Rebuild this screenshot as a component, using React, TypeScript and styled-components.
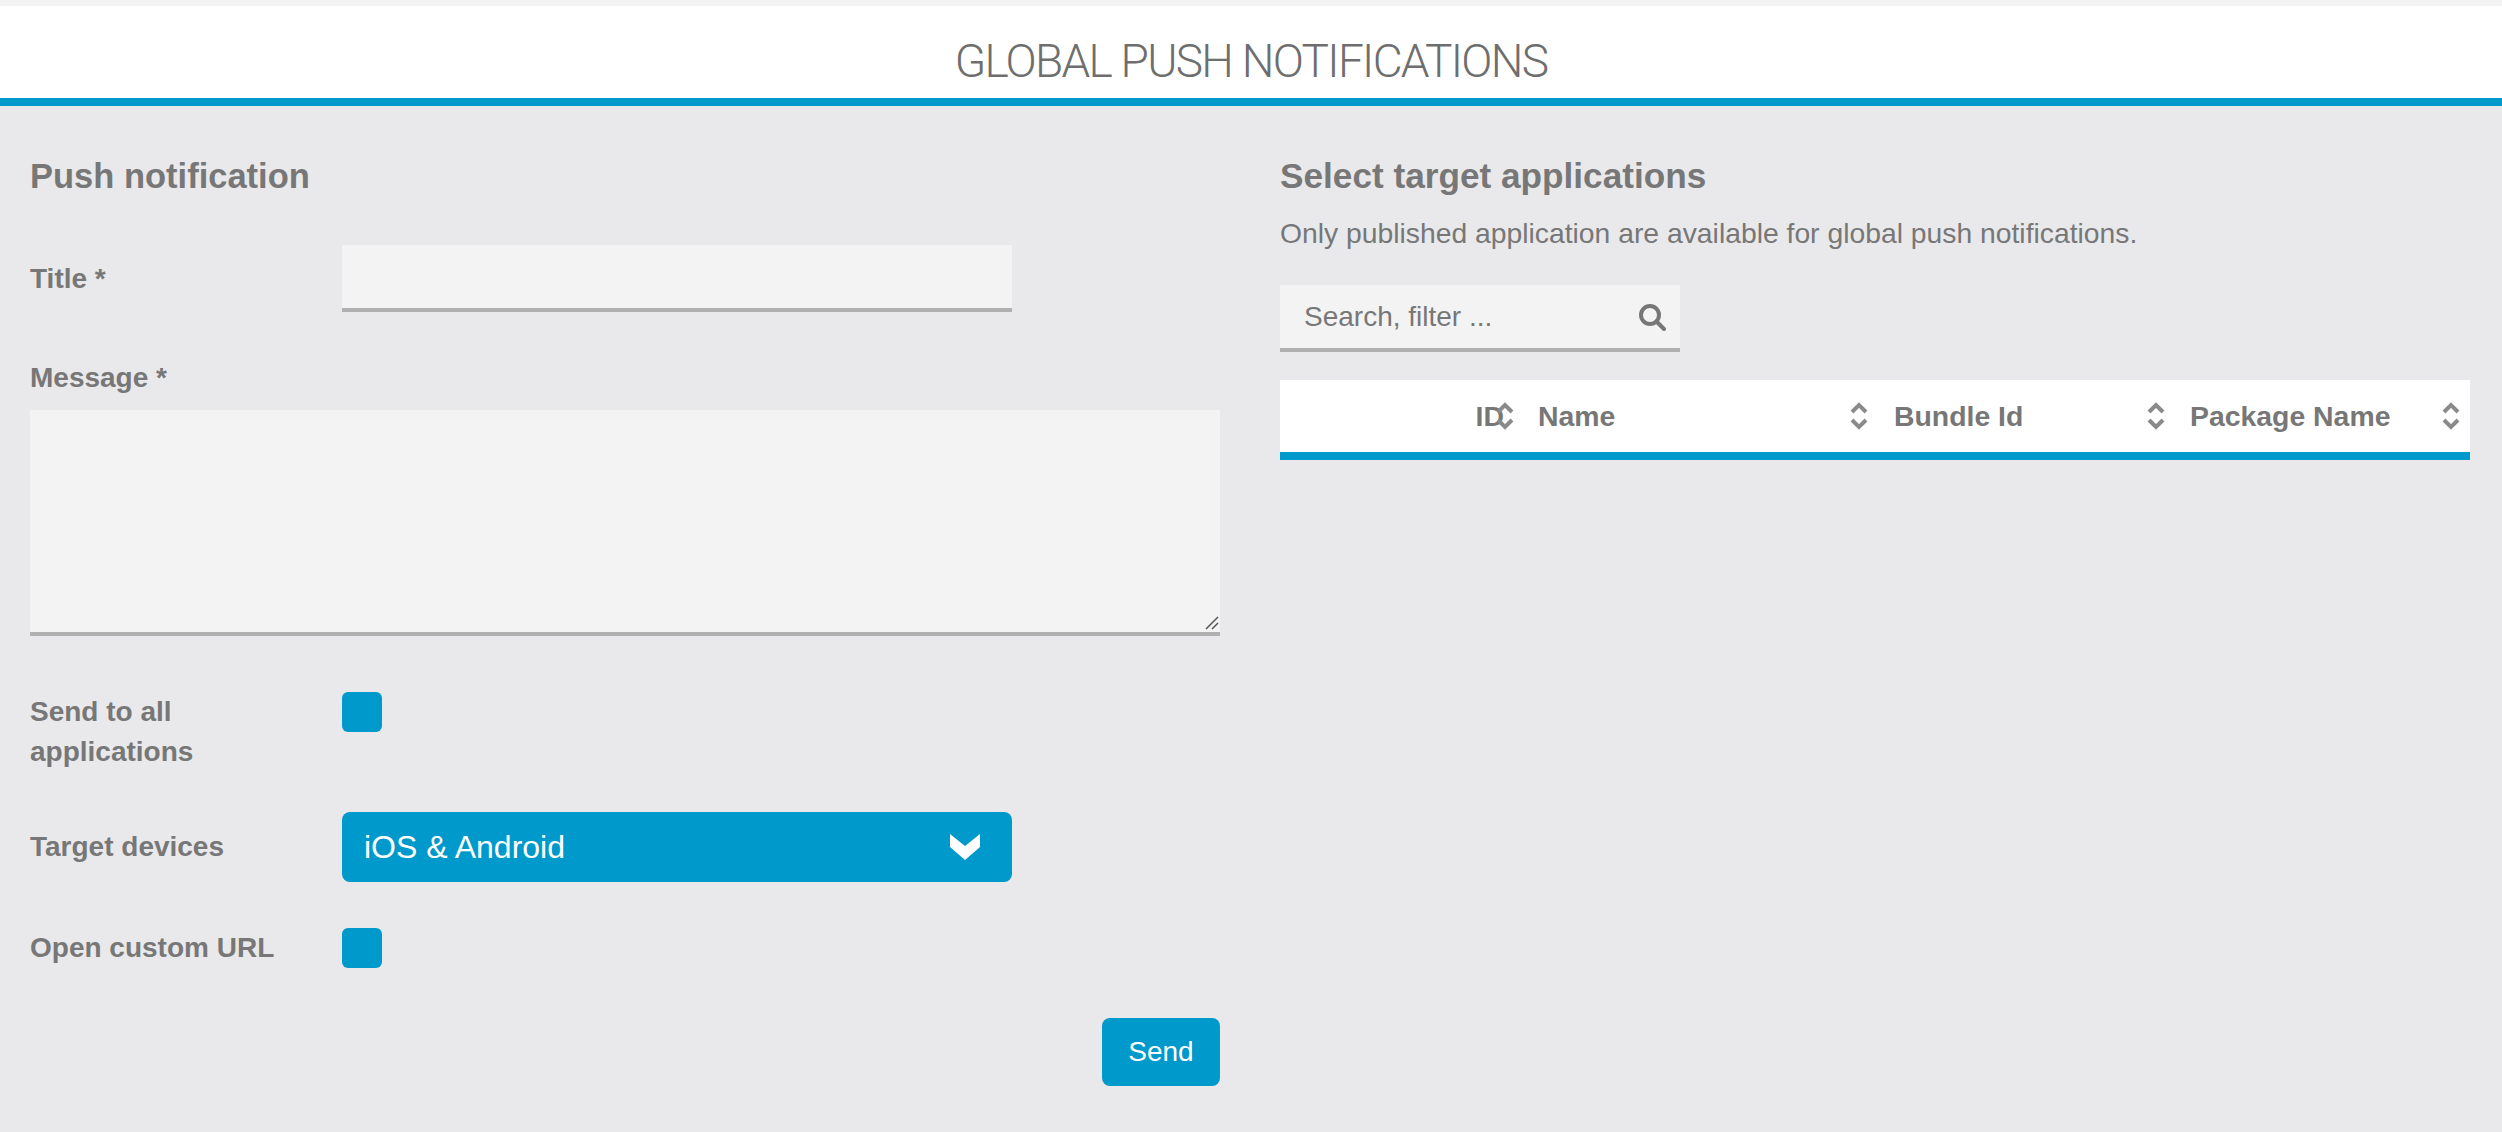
import React from 'react';
import styled, { createGlobalStyle } from 'styled-components';

const blue = '#0099cb';
const grey = '#777777';

const GlobalStyle = createGlobalStyle`
  html, body {
    margin: 0;
    padding: 0;
    background: #e9e9eb;
  }
  * {
    box-sizing: border-box;
  }
`;

const Page = styled.div`
  width: 2502px;
  height: 1132px;
  overflow: hidden;
  padding-top: 6px;
  background: #e9e9eb;
  color: ${grey};
  font-family: 'Liberation Sans', Arial, sans-serif;
  font-size: 28px;
  box-shadow: inset 0 6px 0 #f3f3f3;
`;

const Header = styled.header`
  height: 100px;
  padding-top: 30px;
  background: #fff;
  border-bottom: 8px solid ${blue};
  text-align: center;
`;

const PageTitle = styled.h1`
  margin: 0;
  font-family: Roboto, sans-serif;
  font-weight: 300;
  font-size: 46px;
  line-height: 50px;
  letter-spacing: -1.7px;
  color: #6e6e6e;
`;

const Columns = styled.main`
  display: grid;
  grid-template-columns: 1190px 1190px;
  gap: 60px;
  padding: 0 30px;
`;

const Column = styled.section`
  display: flex;
  flex-direction: column;
`;

const Heading = styled.h2<{ $size: number }>`
  margin: 0;
  padding-top: 50px;
  font-size: ${({ $size }) => $size}px;
  line-height: 40px;
  font-weight: 700;
`;

const Row = styled.div<{ $top: number }>`
  display: grid;
  grid-template-columns: 312px 670px;
  align-items: center;
  margin-top: ${({ $top }) => $top}px;
`;

const Label = styled.label`
  font-weight: 700;
  line-height: 40px;
`;

const MessageLabel = styled(Label)`
  margin-top: 46px;
`;

const TextInput = styled.input`
  display: block;
  width: 100%;
  height: 67px;
  border: 0;
  border-bottom: 4px solid #b0b0b0;
  background: #f3f3f3;
  outline: none;
`;

const MessageBlock = styled.div`
  position: relative;
  margin-top: 12px;
`;

const MessageInput = styled.textarea`
  display: block;
  width: 100%;
  height: 226px;
  border: 0;
  border-bottom: 4px solid #b0b0b0;
  background: #f3f3f3;
  outline: none;
  resize: none;
`;

const Grip = styled.svg`
  position: absolute;
  right: 1px;
  bottom: 6px;
  width: 14px;
  height: 14px;
`;

const Check = styled.span<{ $self?: string }>`
  display: block;
  width: 40px;
  height: 40px;
  border-radius: 6px;
  background: ${blue};
  align-self: ${({ $self }) => $self || 'center'};
`;

const Select = styled.div`
  display: flex;
  align-items: center;
  justify-content: space-between;
  height: 70px;
  padding: 0 32px 0 22px;
  border-radius: 8px;
  background: ${blue};
  color: #fff;
  font-size: 32px;
`;

const Actions = styled.div`
  display: flex;
  justify-content: flex-end;
  margin-top: 50px;
`;

const SendButton = styled.button`
  width: 118px;
  height: 68px;
  border: 0;
  border-radius: 8px;
  background: ${blue};
  color: #fff;
  font-family: inherit;
  font-size: 28px;
`;

const Hint = styled.p`
  margin: 0;
  padding-top: 17px;
  font-size: 28.3px;
  line-height: 40px;
`;

const Search = styled.div`
  display: flex;
  align-items: center;
  justify-content: space-between;
  width: 400px;
  height: 67px;
  margin-top: 32px;
  padding: 0 14px 0 24px;
  border-bottom: 4px solid #b0b0b0;
  background: #f3f3f3;
`;

const TableHead = styled.div`
  display: grid;
  grid-template-columns: 235px 356px 296px 303px;
  height: 80px;
  margin-top: 28px;
  background: #fff;
  border-bottom: 8px solid ${blue};
  font-size: 28.4px;
  font-weight: 700;
`;

const HeadCell = styled.div<{ $end?: boolean; $right: number }>`
  display: flex;
  align-items: center;
  justify-content: ${({ $end }) => ($end ? 'flex-end' : 'space-between')};
  padding: 0 ${({ $right }) => $right}px 0 23px;
`;

const IdSort = styled.span`
  display: flex;
  margin-left: -8px;
`;

const SortIcon = () => (
  <svg width="18" height="30" viewBox="0 0 18 30" fill="none" stroke="#8a8a8a" strokeWidth="4">
    <path d="M2 11 9 4l7 7" />
    <path d="M2 19l7 7 7-7" />
  </svg>
);

export default function App() {
  return (
    <Page>
      <GlobalStyle />
      <Header>
        <PageTitle>GLOBAL PUSH NOTIFICATIONS</PageTitle>
      </Header>
      <Columns>
        <Column>
          <Heading $size={34.5}>Push notification</Heading>
          <Row $top={49}>
            <Label>Title *</Label>
            <TextInput />
          </Row>
          <MessageLabel>Message *</MessageLabel>
          <MessageBlock>
            <MessageInput />
            <Grip viewBox="0 0 14 14" stroke="#555" strokeWidth="1.5">
              <path d="M1 13 13 1M7 13l6-6" />
            </Grip>
          </MessageBlock>
          <Row $top={56}>
            <Label>
              Send to all
              <br />
              applications
            </Label>
            <Check $self="start" />
          </Row>
          <Row $top={40}>
            <Label>Target devices</Label>
            <Select>
              iOS &amp; Android
              <svg width="30" height="26" viewBox="0 0 30 26" fill="#fff">
                <polygon points="0,0 15,12 30,0 30,13 15,26 0,13" />
              </svg>
            </Select>
          </Row>
          <Row $top={46}>
            <Label>Open custom URL</Label>
            <Check />
          </Row>
          <Actions>
            <SendButton>Send</SendButton>
          </Actions>
        </Column>
        <Column>
          <Heading $size={35.2}>Select target applications</Heading>
          <Hint>Only published application are available for global push notifications.</Hint>
          <Search>
            Search, filter ...
            <svg width="28" height="28" viewBox="0 0 28 28" fill="none" stroke="#777" strokeWidth="4">
              <circle cx="12" cy="12" r="9" />
              <path d="M18.5 18.5 26 26" strokeLinecap="round" />
            </svg>
          </Search>
          <TableHead>
            <HeadCell $end $right={1}>
              ID
              <IdSort>
                <SortIcon />
              </IdSort>
            </HeadCell>
            <HeadCell $right={3}>
              Name
              <SortIcon />
            </HeadCell>
            <HeadCell $right={2}>
              Bundle Id
              <SortIcon />
            </HeadCell>
            <HeadCell $right={10}>
              Package Name
              <SortIcon />
            </HeadCell>
          </TableHead>
        </Column>
      </Columns>
    </Page>
  );
}
